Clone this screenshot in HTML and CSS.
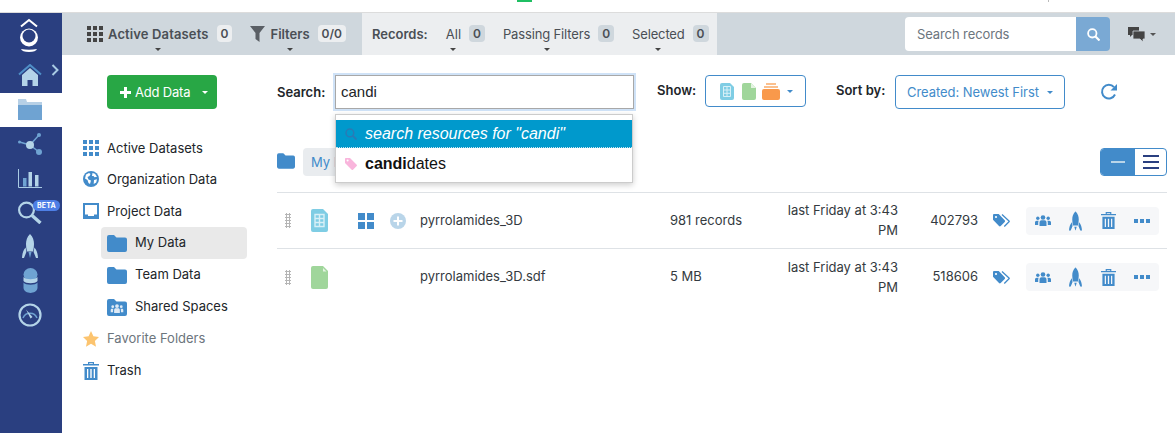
FILE: index.html
```html
<!DOCTYPE html>
<html lang="en">
<head>
<meta charset="utf-8">
<title>Data</title>
<link rel="stylesheet" href="styles.css">
</head>
<body>
<svg class="defs" width="0" height="0" aria-hidden="true">
  <defs>
    <symbol id="i-folder" viewBox="0 0 20 17"><path fill="currentColor" d="M0 2a2 2 0 0 1 2-2h5l2.500 2.500H18a2 2 0 0 1 2 2V15a2 2 0 0 1-2 2H2a2 2 0 0 1-2-2z"/></symbol>
    <symbol id="i-grid" viewBox="0 0 16 16"><path fill="currentColor" d="M0 0h4v4H0zM6 0h4v4H6zM12 0h4v4h-4zM0 6h4v4H0zM6 6h4v4H6zM12 6h4v4h-4zM0 12h4v4H0zM6 12h4v4H6zM12 12h4v4h-4z"/></symbol>
    <symbol id="i-people" viewBox="0 0 16 11"><g fill="currentColor"><circle cx="8" cy="2.500" r="2.300"/><circle cx="2.800" cy="3.300" r="1.700"/><circle cx="13.200" cy="3.300" r="1.700"/><path d="M4.500 11V7.500c0-1.500 1-2.300 2-2.300h3c1 0 2 .8 2 2.300V11zM0 10V7.500c0-1 .7-1.800 1.800-1.800h1.900C3.300 6.200 3.200 7 3.200 7.800V10zM16 10V7.500c0-1-.7-1.800-1.800-1.800h-1.900c.4.500.5 1.300.5 2.100V10z"/></g></symbol>
    <symbol id="i-rocket" viewBox="0 0 16 24"><path fill="currentColor" d="M8 0c3 3 4 6.500 4 10 0 2.500-.3 5-1 7.500H5c-.7-2.500-1-5-1-7.500C4 6.500 5 3 8 0zM3.600 13.500l.8 4.500L2 24H0c.2-4 1.200-8 3.600-10.500zM12.400 13.500c2.400 2.500 3.400 6.500 3.600 10.500h-2l-2.400-6zM6.500 19h3L8 24z"/></symbol>
    <symbol id="i-trash" viewBox="0 0 16 18"><path fill="currentColor" fill-rule="evenodd" d="M5 0h6v2h5v1.500H0V2h5zm1.200 1.200V2h3.600v-.8zM1.500 5h13v13h-13zM4 7v9h1.300V7zm3.300 0v9h1.400V7zm3.400 0v9H12V7z"/></symbol>
    <symbol id="i-tags" viewBox="0 0 17 13"><path fill="currentColor" d="M0 1.200C0 .5.500 0 1.200 0h4.500l6 6.300c.5.500.5 1.200 0 1.700L7.700 12c-.5.500-1.200.5-1.700 0L0 5.700z"/><path fill="none" stroke="currentColor" stroke-width="1.300" d="M9 .5l7 6.400c.3.300.3.600 0 .9l-4.700 4.700"/><circle cx="3" cy="3" r="1.100" fill="#fff"/></symbol>
  </defs>
</svg>

<div class="browser-strip"><i class="strip-green"></i><i class="strip-tick"></i></div>
<div class="app">
  <nav class="rail">
    <div class="rail-top">
      <svg class="logo" width="20" height="34" viewBox="0 0 20 34"><path fill="none" stroke="#fff" stroke-width="2" d="M2 8.500L10 2l8 6.500"/><circle cx="10" cy="19.500" r="9" fill="#fff"/><circle cx="10" cy="18" r="6.500" fill="#2a3f80"/><path fill="#fff" d="M2 31q8 1.500 16 0q-1 3-8 3t-8-3z"/></svg>
      <div class="home-row">
        <svg width="24" height="23" viewBox="0 0 24 23"><path fill="none" stroke="#4f8fc7" stroke-width="2" d="M1 10.500L12 1l11 9.500"/><path fill="#b4d4e8" d="M4 11l8-7 8 7v11h-5.500v-6h-5v6H4z"/></svg>
        <svg class="chev" width="8" height="12" viewBox="0 0 8 12"><path fill="none" stroke="#a9cbe4" stroke-width="2" d="M1.500 1l5 5-5 5"/></svg>
      </div>
    </div>
    <div class="rail-active">
      <svg width="24" height="21" viewBox="0 0 24 21"><path fill="#b7d0e6" d="M0 0h8l1 3h15v3H0z"/><path fill="#6fa3d2" d="M0 6h24v15H0z"/></svg>
    </div>
    <div class="rail-rest">
      <svg class="r-net" width="24" height="24" viewBox="0 0 24 24"><path stroke="#6fa3d2" stroke-width="1.500" d="M1.500 10L12 13M12 13l9-10M12 13l9 7"/><circle cx="1.500" cy="10" r="1.500" fill="#6fa3d2"/><circle cx="21" cy="3" r="2" fill="#6fa3d2"/><circle cx="12" cy="13" r="4" fill="#b4d4e8"/><circle cx="21" cy="20" r="3" fill="#6fa3d2"/></svg>
      <svg class="r-chart" width="24" height="19" viewBox="0 0 24 19"><path fill="none" stroke="#a9cbe4" stroke-width="1" d="M.5 0v18.500H24"/><path fill="#6fa3d2" d="M5 9h3.500v8.500H5z"/><path fill="#b4d4e8" d="M10.500 3H14v14.500h-3.500zM17 6h3.500v11.500H17z"/></svg>
      <div class="search-rail">
        <svg width="24" height="23" viewBox="0 0 24 23"><circle cx="8.500" cy="9" r="7.400" fill="none" stroke="#b4d4e8" stroke-width="2.200"/><path stroke="#b4d4e8" stroke-width="3.400" d="M14 14.500l8.500 7.500"/></svg>
        <span class="beta">BETA</span>
      </div>
      <svg class="r-rocket" width="16" height="24" viewBox="0 0 16 24"><path fill="#b4d4e8" d="M8 0c3 3 4 6.500 4 10 0 2.500-.3 5-1 7.500H5c-.7-2.500-1-5-1-7.500C4 6.500 5 3 8 0zM3.600 13.500l.8 4.500L2 24H0c.2-4 1.200-8 3.600-10.500zM12.400 13.500c2.400 2.500 3.400 6.500 3.600 10.500h-2l-2.400-6z"/><path fill="#6fa3d2" d="M6.500 18h3L8 24z"/></svg>
      <svg class="r-db" width="15" height="25" viewBox="0 0 15 25"><ellipse cx="7.500" cy="6.500" rx="7" ry="6.500" fill="#6fa3d2"/><path fill="#b4d4e8" d="M.5 9c2 3 12 3 14 0v4c-2 3-12 3-14 0z"/><path fill="#6fa3d2" d="M.5 14.500c2 3 12 3 14 0v5.500c-1 6.500-13 6.500-14 0z"/></svg>
      <svg width="24" height="24" viewBox="0 0 24 24"><circle cx="12" cy="12" r="10.500" fill="none" stroke="#b4d4e8" stroke-width="2.200"/><path fill="none" stroke="#6fa3d2" stroke-width="1.500" d="M5 15a7.500 7.500 0 0 1 14 0"/><path fill="#b4d4e8" d="M8 6.500l6.500 7.500-2 1.500z"/></svg>
    </div>
  </nav>

  <div class="main">
    <header class="topbar">
      <div class="tb-group tb-datasets">
        <svg class="tb-grid" width="16" height="16"><use href="#i-grid"/></svg>
        <span class="tb-item strong wide">Active Datasets<i class="caret"></i></span>
        <span class="count">0</span>
        <svg class="tb-filter" width="15" height="16" viewBox="0 0 15 16"><path fill="currentColor" d="M0 0h15L9.500 7v9L5.500 13V7z"/></svg>
        <span class="tb-item strong">Filters<i class="caret"></i></span>
        <span class="count">0/0</span>
      </div>
      <div class="tb-group tb-records">
        <span class="strong rec-label">Records:</span>
        <span class="tb-item">All<i class="caret"></i></span>
        <span class="count dark">0</span>
        <span class="tb-item rec-gap">Passing Filters<i class="caret"></i></span>
        <span class="count dark">0</span>
        <span class="tb-item rec-gap">Selected<i class="caret"></i></span>
        <span class="count dark">0</span>
      </div>
      <div class="tb-right">
        <div class="record-search">
          <span class="record-input">Search records</span>
          <span class="record-btn"><svg width="13" height="13" viewBox="0 0 13 13"><circle cx="5.300" cy="5.300" r="4.200" fill="none" stroke="#fff" stroke-width="1.800"/><path stroke="#fff" stroke-width="2.200" d="M8.500 8.500l4 4"/></svg></span>
        </div>
        <svg class="chat" width="17" height="15" viewBox="0 0 17 15"><path fill="#444" d="M0 0h11v8H4l-2 2V8H0z"/><path fill="#444" d="M5 4h12v8h-2v3l-3-3H5z" stroke="#cfd7dd" stroke-width=".8"/></svg>
        <i class="mini-caret gray"></i>
      </div>
    </header>

    <div class="content">
      <aside class="side">
        <button class="add-btn"><svg width="11" height="11" viewBox="0 0 11 11"><path fill="#fff" d="M4 0h3v4h4v3H7v4H4V7H0V4h4z"/></svg>Add Data<i class="mini-caret white"></i></button>
        <ul class="tree">
          <li class="tree-item"><svg class="blue" width="16" height="16"><use href="#i-grid"/></svg>Active Datasets</li>
          <li class="tree-item"><svg width="16" height="16" viewBox="0 0 16 16"><circle cx="8" cy="8" r="8" fill="#428bca"/><path fill="#fff" d="M3 3.500l3-1.500 1.500 1-1 2L4.500 6l1 2.500 2.500 1-1 3.500-1.500-1-1-3L2 7.500zM9.500 2l2.500.8 2 3-2.500.5-1-1.300-1.500 0zM11 9l3-.8-.8 3.300-2.500 1.500z"/></svg>Organization Data</li>
          <li class="tree-item"><svg width="16" height="16" viewBox="0 0 16 16"><path fill="#428bca" d="M0 0h16v16H0z"/><path fill="#fff" d="M2 2h12v9.500h-3V13H5v-1.500H2z"/></svg>Project Data</li>
          <li class="tree-item sub active"><svg class="blue" width="20" height="17"><use href="#i-folder"/></svg>My Data</li>
          <li class="tree-item sub"><svg class="blue" width="20" height="17"><use href="#i-folder"/></svg>Team Data</li>
          <li class="tree-item sub"><svg width="20" height="17" viewBox="0 0 20 17"><path fill="#428bca" d="M0 2a2 2 0 0 1 2-2h5l2.500 2.500H18a2 2 0 0 1 2 2V15a2 2 0 0 1-2 2H2a2 2 0 0 1-2-2z"/><svg x="3" y="5" width="14" height="9" viewBox="0 0 16 11" color="#dfeaf5"><use href="#i-people"/></svg></svg>Shared Spaces</li>
          <li class="tree-item muted"><svg width="16" height="16" viewBox="0 0 16 16"><path fill="#fcc46f" d="M8 0l2.400 5.300 5.600.7-4.100 3.900 1.100 5.800L8 12.800l-5 2.900 1.100-5.800L0 6l5.600-.7z"/></svg>Favorite Folders</li>
          <li class="tree-item last"><svg class="blue" width="16" height="18"><use href="#i-trash"/></svg>Trash</li>
        </ul>
      </aside>

      <section class="panel">
        <div class="toolbar">
          <label class="strong lbl search-lbl">Search:</label>
          <div class="search-wrap">
            <div class="search-input">candi</div>
            <div class="suggest">
              <div class="suggest-hit"><svg width="12" height="12" viewBox="0 0 13 13"><circle cx="5.300" cy="5.300" r="4.200" fill="none" stroke="#2a7ab5" stroke-width="1.600"/><path stroke="#2a7ab5" stroke-width="2" d="M8.500 8.500l4 4"/></svg>search resources for "candi"</div>
              <div class="suggest-row"><svg width="12" height="12" viewBox="0 0 12 12"><path fill="#f9b5dc" d="M0 1c0-.6.400-1 1-1h4l6.700 6.700c.4.400.4.900 0 1.300L8 11.700c-.4.400-.9.400-1.300 0L0 5z"/><circle cx="2.600" cy="2.600" r="1" fill="#fff"/></svg><span><b>candi</b>dates</span></div>
            </div>
          </div>
          <label class="strong lbl show-lbl">Show:</label>
          <button class="out-btn show-btn">
            <svg width="14" height="17" viewBox="0 0 14 17"><path fill="#7fcde4" d="M2 0h8l4 4v11a2 2 0 0 1-2 2H2a2 2 0 0 1-2-2V2a2 2 0 0 1 2-2z"/><path fill="none" stroke="#d8f0f7" stroke-width="1" d="M3.500 3.500h7v10h-7zM3.500 7h7M3.500 10.300h7M7 3.500v10"/></svg>
            <svg width="14" height="17" viewBox="0 0 14 17"><path fill="#a0d69b" d="M2 0h7l5 5v10a2 2 0 0 1-2 2H2a2 2 0 0 1-2-2V2a2 2 0 0 1 2-2z"/><path fill="#e4f3e2" d="M9 0l5 5H9z"/></svg>
            <svg class="show-box" width="18" height="17" viewBox="0 0 18 17"><path fill="#fbc08e" d="M4 0h10v2H4zM2 3h14v2H2z"/><path fill="#f9994b" d="M0 8a2 2 0 0 1 2-2h14a2 2 0 0 1 2 2v7a2 2 0 0 1-2 2H2a2 2 0 0 1-2-2z"/></svg>
            <i class="mini-caret blue-c"></i>
          </button>
          <label class="strong lbl sort-lbl">Sort by:</label>
          <button class="out-btn sort-btn">Created: Newest First<i class="mini-caret blue-c"></i></button>
          <svg class="refresh" width="18" height="18" viewBox="0 0 18 18"><path fill="none" stroke="#428bca" stroke-width="2" d="M15 11.500A6.800 6.800 0 1 1 14 4.200"/><path fill="#428bca" d="M17 1v6.500h-6.500z"/></svg>
        </div>

        <div class="crumbs">
          <svg class="blue" width="18" height="16"><use href="#i-folder"/></svg>
          <span class="crumb">My Data</span>
          <div class="toggle">
            <span class="tog-on"><i></i></span>
            <span class="tog-off"><i></i><i></i><i></i></span>
          </div>
        </div>

        <div class="row">
          <span class="drag"></span>
          <svg class="ficon" width="17" height="23" viewBox="0 0 17 23"><path fill="#7fcde4" d="M2 0h10l5 5v16a2 2 0 0 1-2 2H2a2 2 0 0 1-2-2V2a2 2 0 0 1 2-2z"/><path fill="none" stroke="#d8f0f7" stroke-width="1.400" d="M4 5.500h9v12H4zM4 9.500h9M4 13.500h9M8.500 5.500v12"/></svg>
          <span class="extras">
            <svg width="16" height="16" viewBox="0 0 16 16"><path fill="#428bca" d="M0 0h7v7H0zM9 0h7v7H9zM0 9h7v7H0zM9 9h7v7H9z"/></svg>
            <svg width="16" height="16" viewBox="0 0 16 16"><circle cx="8" cy="8" r="8" fill="#b9d5e9"/><path fill="#fff" d="M7 3.500h2V7h3.500v2H9v3.500H7V9H3.500V7H7z"/></svg>
          </span>
          <span class="name">pyrrolamides_3D</span>
          <span class="size">981 records</span>
          <span class="date">last Friday at 3:43 PM</span>
          <span class="id">402793</span>
          <svg class="tag blue" width="17" height="13"><use href="#i-tags"/></svg>
          <span class="acts">
            <svg class="blue" width="16" height="11"><use href="#i-people"/></svg>
            <svg class="blue" width="13" height="20" viewBox="0 0 16 24"><use href="#i-rocket"/></svg>
            <svg class="blue" width="15" height="17"><use href="#i-trash"/></svg>
            <span class="dots"><i></i><i></i><i></i></span>
          </span>
        </div>
        <div class="row">
          <span class="drag"></span>
          <svg class="ficon" width="17" height="23" viewBox="0 0 17 23"><path fill="#a0d69b" d="M2 0h10l5 5v16a2 2 0 0 1-2 2H2a2 2 0 0 1-2-2V2a2 2 0 0 1 2-2z"/><path fill="#e4f3e2" d="M12 2l3.500 3.500H12z"/></svg>
          <span class="extras"></span>
          <span class="name">pyrrolamides_3D.sdf</span>
          <span class="size">5 MB</span>
          <span class="date">last Friday at 3:43 PM</span>
          <span class="id">518606</span>
          <svg class="tag blue" width="17" height="13"><use href="#i-tags"/></svg>
          <span class="acts">
            <svg class="blue" width="16" height="11"><use href="#i-people"/></svg>
            <svg class="blue" width="13" height="20" viewBox="0 0 16 24"><use href="#i-rocket"/></svg>
            <svg class="blue" width="15" height="17"><use href="#i-trash"/></svg>
            <span class="dots"><i></i><i></i><i></i></span>
          </span>
        </div>
      </section>
    </div>
  </div>
</div>
</body>
</html>
```

FILE: styles.css
```css
* { box-sizing: border-box; }
html, body { margin: 0; height: 100%; overflow: hidden; }
body { font-family: Inter, "Liberation Sans", sans-serif; font-size: 13px; color: #212529; background: #fff; }
.defs { position: absolute; }
svg { display: block; flex: none; }
.blue { color: #428bca; }
.strong { font-weight: 600; }

.browser-strip { height: 13px; border-bottom: 1px solid #dcdcdc; display: flex; align-items: flex-start; }
.strip-green { width: 15px; height: 2px; margin-left: 517px; background: #1fbf63; display: block; }
.strip-tick { width: 1px; height: 2px; margin-left: 516px; background: #bbb; display: block; }
.app { display: flex; height: 420px; }

/* rail */
.rail { width: 62px; flex: none; background: #2a3f80; display: flex; flex-direction: column; }
.rail-top { height: 80px; display: flex; flex-direction: column; align-items: flex-start; }
.logo { margin: 5px 0 0 19px; }
.home-row { display: flex; margin: 12px 0 0 18px; align-items: flex-start; }
.chev { margin: 0 0 0 9px; }
.rail-active { height: 34px; background: #fff; padding: 6px 0 0 18px; }
.rail-rest { flex: 1; display: flex; flex-direction: column; align-items: flex-start; padding: 5px 0 0 18px; }
.r-net { margin-bottom: 13px; }
.r-chart { margin-bottom: 13px; }
.search-rail { position: relative; height: 23px; margin-bottom: 10px; }
.r-rocket { margin-bottom: 10px; margin-left: 4px; }
.r-db { margin-bottom: 10px; margin-left: 5px; }
.beta { position: absolute; left: 15px; top: -1px; width: 27px; height: 11px; border-radius: 6px; background: #4e7fe6; color: #fff; font-size: 7px; font-weight: 700; line-height: 11px; text-align: center; letter-spacing: .2px; }

.main { flex: 1; min-width: 0; display: flex; flex-direction: column; }

/* top bar */
.topbar { height: 42px; background: #cfd7dd; display: flex; align-items: stretch; color: #4a4f55; flex: none; }
.tb-group { display: flex; align-items: center; padding-bottom: 1px; }
.tb-datasets { width: 300px; padding-left: 25px; }
.tb-grid { color: #444; margin-right: 5px; }
.tb-filter { color: #5a5f65; margin: 0 5px 0 18px; }
.tb-records { background: #eceef0; width: 355px; padding-left: 10px; }
.rec-label { margin-right: 18px; }
.rec-gap { margin-left: 18px; letter-spacing: -.15px; }
.wide { letter-spacing: .13px; }
.tb-item { position: relative; line-height: 16px; white-space: nowrap; }
.caret { position: absolute; left: 50%; bottom: -9px; margin-left: -3px; border: 3.500px solid transparent; border-top-color: #444; border-bottom-width: 0; }
.count { margin-left: 8px; height: 17px; padding: 0 4px; border-radius: 4px; background: #eceef0; font-size: 12px; font-weight: 600; line-height: 17px; }
.count.dark { background: #cfd7dd; }
.tb-right { flex: 1; display: flex; align-items: center; padding-left: 188px; }
.record-search { display: flex; height: 34px; border-radius: 4px; overflow: hidden; }
.record-input { width: 171px; background: #fff; color: #6c757d; padding-left: 12px; line-height: 34px; letter-spacing: -.1px; }
.record-btn { width: 34px; background: #7aa9d4; display: flex; align-items: center; justify-content: center; }
.chat { margin: 0 5px 0 18px; }

.mini-caret { display: inline-block; border: 3.500px solid transparent; border-top-color: currentColor; border-bottom-width: 0; margin-left: 8px; }
.mini-caret.gray { color: #555; margin-left: 0; }
.mini-caret.white { color: #fff; }
.mini-caret.blue-c { color: #428bca; }

/* side */
.content { flex: 1; display: flex; min-height: 0; }
.side { width: 200px; flex: none; padding: 20px 0 0 21px; }
.add-btn { margin-left: 24px; width: 110px; height: 34px; border: 0; border-radius: 4px; background: #28a745; color: #fff; font: inherit; letter-spacing: -.2px; display: flex; align-items: center; gap: 4px; padding: 0 0 0 13px; }
.tree { list-style: none; margin: 23px 0 0; padding: 0; }
.tree-item { height: 32px; display: flex; align-items: center; gap: 8px; color: #212529; white-space: nowrap; }
.tree-item:nth-child(1) { height: 31px; }
.tree-item.sub { margin-left: 18px; width: 146px; padding: 0 0 2px 6px; gap: 8px; }
.tree-item.sub svg, .tree-item.muted svg, .tree-item.last svg { margin-top: 2px; }
.tree-item.active { background: #e9e9e9; border-radius: 4px; }
.tree-item.muted { color: #6c757d; padding-bottom: 2px; }
.tree-item.last { padding-bottom: 2px; }

/* panel */
.panel { flex: 1; min-width: 0; padding: 20px 8px 0 15px; }
.toolbar { display: flex; align-items: flex-start; height: 73px; }
.lbl { line-height: 34px; white-space: nowrap; }
.search-lbl { width: 58px; }
.search-wrap { position: relative; width: 299px; }
.search-input { height: 34px; border: 1px solid #a8a8a8; box-shadow: 0 0 0 2px #cfe2f7; font-family: "Liberation Sans", Arial, sans-serif; font-size: 15px; line-height: 32px; padding-left: 5px; }
.suggest { position: absolute; z-index: 2; left: 0; top: 39px; width: 298px; height: 69px; padding-top: 5px; background: #fff; border: 1px solid #ccc; box-shadow: 0 2px 6px rgba(0,0,0,.2); font-family: "Liberation Sans", Arial, sans-serif; font-size: 16px; }
.suggest-hit { height: 28px; background: #0099cc; color: #fff; font-style: italic; display: flex; align-items: center; gap: 8px; padding-left: 9px; border-bottom: 1px dotted #c5e4f0; }
.suggest-row { height: 32px; display: flex; align-items: center; gap: 8px; padding-left: 9px; color: #111; }
.suggest-row b { font-weight: 700; }
.show-lbl { margin-left: 23px; width: 48px; line-height: 30px; }
.out-btn { height: 34px; border: 1px solid #428bca; border-radius: 4px; background: #fff; color: #428bca; font: inherit; display: flex; align-items: center; padding: 0; }
.show-btn { width: 101px; height: 32px; padding-left: 14px; gap: 8px; }
.show-box { margin-left: -2px; }
.show-btn .mini-caret { margin-left: -1px; }
.sort-lbl { margin-left: 30px; width: 59px; line-height: 30px; }
.sort-btn { width: 170px; justify-content: center; letter-spacing: -.05px; }
.refresh { margin: 8px 0 0 35px; }

.crumbs { height: 45px; display: flex; align-items: flex-start; border-bottom: 1px solid #dee2e6; }
.crumbs > svg { margin-top: 5px; }
.crumb { margin-left: 8px; height: 28px; line-height: 28px; padding: 0 8px; border-radius: 4px; background: #e9ecef; color: #428bca; white-space: nowrap; }
.toggle { margin-left: auto; width: 67px; height: 28px; display: flex; border: 1px solid #428bca; border-radius: 4px; overflow: hidden; }
.tog-on { width: 34px; background: #428bca; display: flex; align-items: center; justify-content: center; }
.tog-on i { width: 14px; height: 2px; background: #b9d5e9; display: block; }
.tog-off { flex: 1; display: flex; flex-direction: column; align-items: center; justify-content: center; gap: 4px; }
.tog-off i { width: 16px; height: 2px; background: #2a3f80; display: block; }

.row { height: 56px; display: flex; align-items: center; border-bottom: 1px solid #dee2e6; color: #343a40; }
.row:last-child { border-bottom: 0; }
.drag { width: 6px; height: 15px; margin-left: 8px; background-image: radial-gradient(circle, #b5b5b5 1px, transparent 1.100px); background-size: 3px 3px; }
.ficon { margin-left: 20px; }
.extras { width: 92px; padding-left: 30px; display: flex; gap: 16px; }
.name { width: 250px; white-space: nowrap; margin-bottom: 2px; }
.size { width: 116px; white-space: nowrap; margin-bottom: 2px; }
.date { width: 112px; text-align: right; line-height: 20px; margin-bottom: 1px; }
.id { width: 80px; text-align: right; margin-bottom: 2px; }
.tag { margin-left: 15px; }
.acts { margin-left: 16px; width: 133px; height: 28px; background: #f6f7f9; border-radius: 4px; display: flex; align-items: center; justify-content: space-between; padding: 0 9px; }
.dots { display: flex; gap: 2px; }
.dots i { width: 4px; height: 4px; background: #428bca; display: block; }
```
